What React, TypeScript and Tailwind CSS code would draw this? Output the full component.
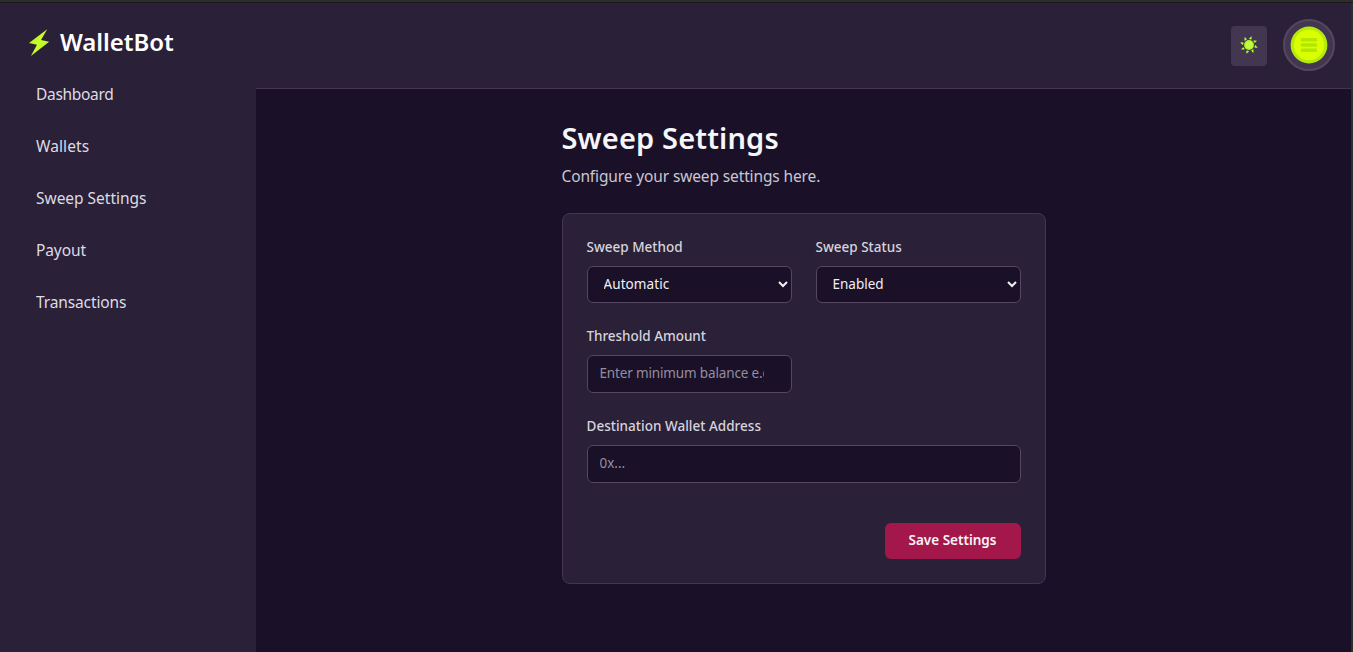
import type { ReactNode } from "react";

const navItems = [
  { label: "Dashboard", cls: "tracking-[-0.3px]" },
  { label: "Wallets", cls: "tracking-[0.1px]" },
  { label: "Sweep Settings", cls: "tracking-[-0.02px]" },
  { label: "Payout", cls: "tracking-[-0.1px]" },
  { label: "Transactions", cls: "tracking-[-0.12px]" },
];

function BoltIcon() {
  return (
    <svg width="22" height="28" viewBox="0 0 22 28" className="block shrink-0">
      <defs>
        <linearGradient id="bolt" x1="0" y1="0" x2="1" y2="1">
          <stop offset="0" stopColor="#a5e81c" />
          <stop offset="0.5" stopColor="#ccff2a" />
          <stop offset="1" stopColor="#a8f01c" />
        </linearGradient>
      </defs>
      <path d="M19.2 1.2 1 15 9 16.8 2.9 28 21.2 13.8 13 12Z" fill="url(#bolt)" />
    </svg>
  );
}

const rays = [13, 58, 103, 148, 193, 238, 283, 328];

function SunIcon() {
  return (
    <svg width="18" height="18" viewBox="-9 -9 18 18" className="-mt-px block">
      {rays.map((a) => (
        <path key={a} d="M-1.5 -6 Q-0.7 -7.6 0.5 -9 Q1.3 -7.5 1.1 -5.9 Q-0.2 -5.5 -1.5 -6Z" fill="#b8f92a" transform={`rotate(${a})`} />
      ))}
      <circle r="4.9" fill="#b0f526" />
      <circle r="3.6" fill="#c0ff3c" />
    </svg>
  );
}

function MenuCoin() {
  return (
    <svg width="38" height="38" viewBox="0 0 38 38" className="block">
      <circle cx="19" cy="19" r="18.4" fill="#b3ec0c" />
      <circle cx="19" cy="19" r="15.2" fill="#d9ff00" />
      <rect x="10.8" y="12" width="16.2" height="3.6" rx="1.2" fill="#b3e600" />
      <rect x="10.8" y="17.2" width="16.2" height="3.6" rx="1.2" fill="#b3e600" />
      <rect x="10.8" y="22.4" width="16.2" height="3.6" rx="1.2" fill="#b3e600" />
    </svg>
  );
}

function Field({ label, tracking, className, children }: { label: string; tracking: string; className?: string; children: ReactNode }) {
  return (
    <label className={className}>
      <span className={`-mt-px mb-[9px] block text-[13.5px] leading-5 font-medium whitespace-nowrap text-[#d6d3dc] ${tracking}`}>{label}</span>
      {children}
    </label>
  );
}

export default function App() {
  return (
    <div className="flex h-[652px] flex-col overflow-hidden bg-[#1a1128] font-['Noto_Sans',sans-serif]">
      <div className="h-[3px] shrink-0 border-b border-[#191919] bg-[#2d2d2d]" />
      <div className="flex min-h-0 flex-1 border-r-2 border-[#2d2d2d]">
        <aside className="w-64 shrink-0 bg-[#2a2038]">
          <div className="flex h-16 items-center gap-2.5 pt-[13px] pl-7">
            <BoltIcon />
            <span className="text-[24px] leading-8 font-semibold tracking-[-0.05px] text-white">WalletBot</span>
          </div>
          <nav className="flex flex-col gap-3 px-5 pt-[7px]">
            {navItems.map((n) => (
              <a key={n.label} className={`block px-4 py-2 text-[15.5px] leading-6 text-[#dedbe3] ${n.cls}`}>{n.label}</a>
            ))}
          </nav>
        </aside>
        <div className="flex min-w-0 flex-1 flex-col">
          <header className="flex h-[86px] shrink-0 items-center justify-end gap-4 border-b border-[#423650] bg-[#2a2038] pr-4">
            <button className="flex h-10 w-9 items-center justify-center rounded bg-[#423650]">
              <SunIcon />
            </button>
            <button className="-mt-px flex h-[52px] w-[52px] items-center justify-center rounded-full border-2 border-[#54475f] bg-[#423650]">
              <MenuCoin />
            </button>
          </header>
          <main className="mx-auto w-[484px] pt-[31px]">
            <h1 className="text-[29px] leading-9 font-semibold tracking-[0.15px] text-[#f6f5f8]">Sweep Settings</h1>
            <p className="mt-2 text-[15.5px] leading-6 tracking-[-0.13px] text-[#c9c5d0]">Configure your sweep settings here.</p>
            <form className="mt-[25px] h-[371px] rounded-lg border border-[#423650] bg-[#2a2038] p-6">
              <div className="grid grid-cols-2 gap-x-6 gap-y-6">
                <Field label="Sweep Method" tracking="tracking-[0px]">
                  <select className="block h-[37px] w-full rounded-md border border-[#54475f] bg-[#1a1128] px-3 pb-0.5 text-[13.5px] tracking-[0.08px] text-[#f1eff4]">
                    <option>Automatic</option>
                  </select>
                </Field>
                <Field label="Sweep Status" tracking="tracking-[0px]">
                  <select className="block h-[37px] w-full rounded-md border border-[#54475f] bg-[#1a1128] px-3 pb-0.5 text-[13.5px] text-[#f1eff4]">
                    <option>Enabled</option>
                  </select>
                </Field>
                <Field label="Threshold Amount" tracking="tracking-[-0.04px]">
                  <input type="number" placeholder="Enter minimum balance e.g. 0.05" className="block h-[38px] w-full rounded-md border border-[#54475f] bg-[#1a1128] px-3 pb-0.5 text-[13.5px] tracking-[-0.15px] placeholder:text-[#948da0]" />
                </Field>
                <Field label="Destination Wallet Address" tracking="tracking-[0.02px]" className="col-span-2">
                  <input type="text" placeholder="0x..." className="block h-[38px] w-full rounded-md border border-[#54475f] bg-[#1a1128] px-3 pb-0.5 text-[13.5px] placeholder:text-[#948da0]" />
                </Field>
              </div>
              <div className="mt-10 flex justify-end">
                <button type="button" className="h-9 w-[136px] rounded-md bg-[#a3174a] pb-0.5 text-[13.5px] font-semibold whitespace-nowrap text-[#f8f4f7]">Save Settings</button>
              </div>
            </form>
          </main>
        </div>
      </div>
    </div>
  );
}
